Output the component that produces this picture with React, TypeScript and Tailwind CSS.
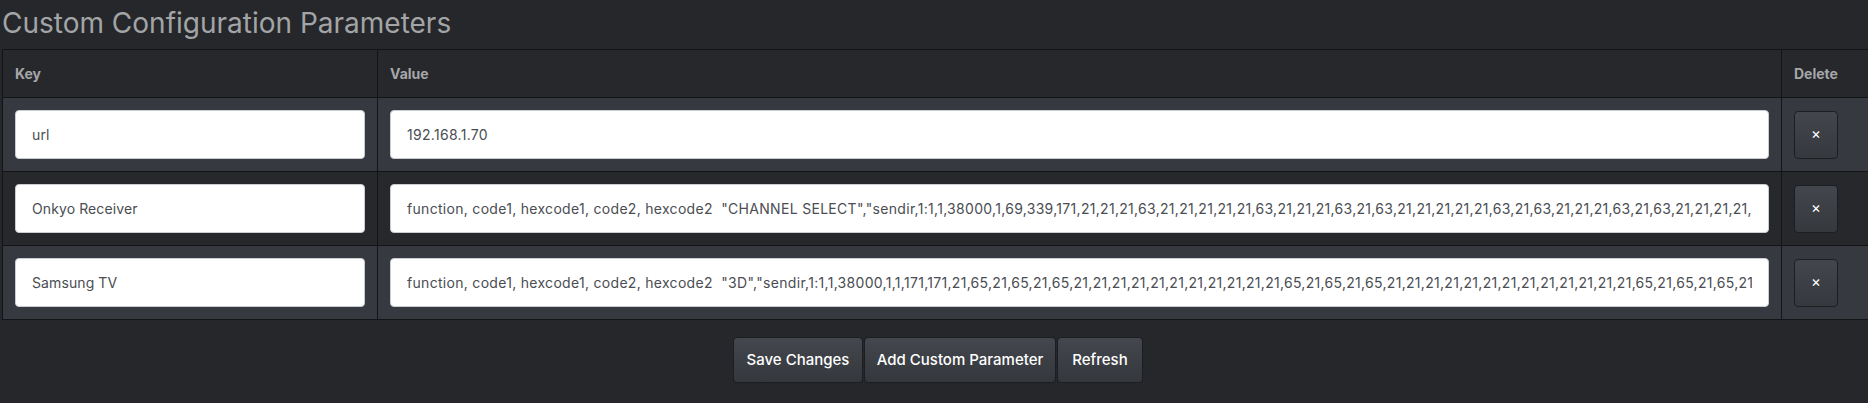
import React from "react";

const rows = [
  { key: "url", value: "192.168.1.70" },
  {
    key: "Onkyo Receiver",
    value:
      'function, code1, hexcode1, code2, hexcode2  "CHANNEL SELECT","sendir,1:1,1,38000,1,69,339,171,21,21,21,63,21,21,21,21,21,63,21,21,21,63,21,63,21,21,21,21,21,63,21,63,21,21,21,63,21,63,21,21,21,21,21,63,21,21,21,21,21,63,21,21,21,1500"',
  },
  {
    key: "Samsung TV",
    value:
      'function, code1, hexcode1, code2, hexcode2  "3D","sendir,1:1,1,38000,1,1,171,171,21,65,21,65,21,65,21,21,21,21,21,21,21,21,21,21,21,65,21,65,21,65,21,21,21,21,21,21,21,21,21,21,21,21,21,65,21,65,21,65,21,65,21,21,21,21,21,1700"',
  },
];

const buttons = [
  { t: "Save Changes", w: "w-[130px]" },
  { t: "Add Custom Parameter", w: "w-[192px]" },
  { t: "Refresh", w: "w-[86px]" },
];

export default function App() {
  return (
    <div
      className="min-h-[403px] w-full overflow-hidden bg-[#25272b] text-[#a6a7a9]"
      style={{ fontFamily: "Inter, 'Noto Sans', 'Liberation Sans', sans-serif" }}
    >
      <h1 className="mt-[6px] mb-[8px] ml-[2px] text-[28px] leading-[35px] font-normal text-[#a3a4a6]">
        Custom Configuration Parameters
      </h1>
      <table className="ml-[2px] w-[1868px] table-fixed border-collapse">
        <colgroup>
          <col className="w-[375px]" />
          <col className="w-[1404px]" />
          <col className="w-[89px]" />
        </colgroup>
        <thead>
          <tr className="h-[48px] bg-[#26282c]">
            <th className="border border-[#131416] px-3 text-left text-[14px] font-bold text-[#a6a7a9]">Key</th>
            <th className="border border-[#131416] px-3 text-left text-[14px] font-bold text-[#a6a7a9]">Value</th>
            <th className="border border-[#131416] px-3 text-left text-[14px] font-bold text-[#a6a7a9]">Delete</th>
          </tr>
        </thead>
        <tbody>
          {rows.map((r, i) => (
            <tr key={i} className={i % 2 === 0 ? "bg-[#363940]" : "bg-[#26282c]"}>
              <td className="border border-[#131416] p-3">
                <input
                  readOnly
                  defaultValue={r.key}
                  className="h-[49px] w-full rounded-[4px] border border-[#c9ccd1] bg-white px-4 text-[14px] tracking-[0.1px] text-[#4a4d52] outline-none"
                />
              </td>
              <td className="border border-[#131416] p-3">
                <input
                  readOnly
                  defaultValue={r.value}
                  className="h-[49px] w-full rounded-[4px] border border-[#c9ccd1] bg-white px-4 text-[14px] tracking-[0.3px] text-[#4a4d52] outline-none"
                />
              </td>
              <td className="border border-[#131416] p-3">
                <button className="flex h-[48px] w-[44px] items-center justify-center rounded-[4px] border border-[#1c1e21] bg-gradient-to-b from-[#43464c] to-[#35383d] text-[15px] text-white">
                  ×
                </button>
              </td>
            </tr>
          ))}
        </tbody>
      </table>
      <div className="mt-[17px] flex justify-center gap-[1px] pl-[8px]">
        {buttons.map((b) => (
          <button
            key={b.t}
            className={`${b.w} h-[46px] rounded-[4px] border border-[#1c1e21] bg-gradient-to-b from-[#44474d] to-[#34373c] text-center text-[15px] font-medium text-white`}
          >
            {b.t}
          </button>
        ))}
      </div>
    </div>
  );
}
